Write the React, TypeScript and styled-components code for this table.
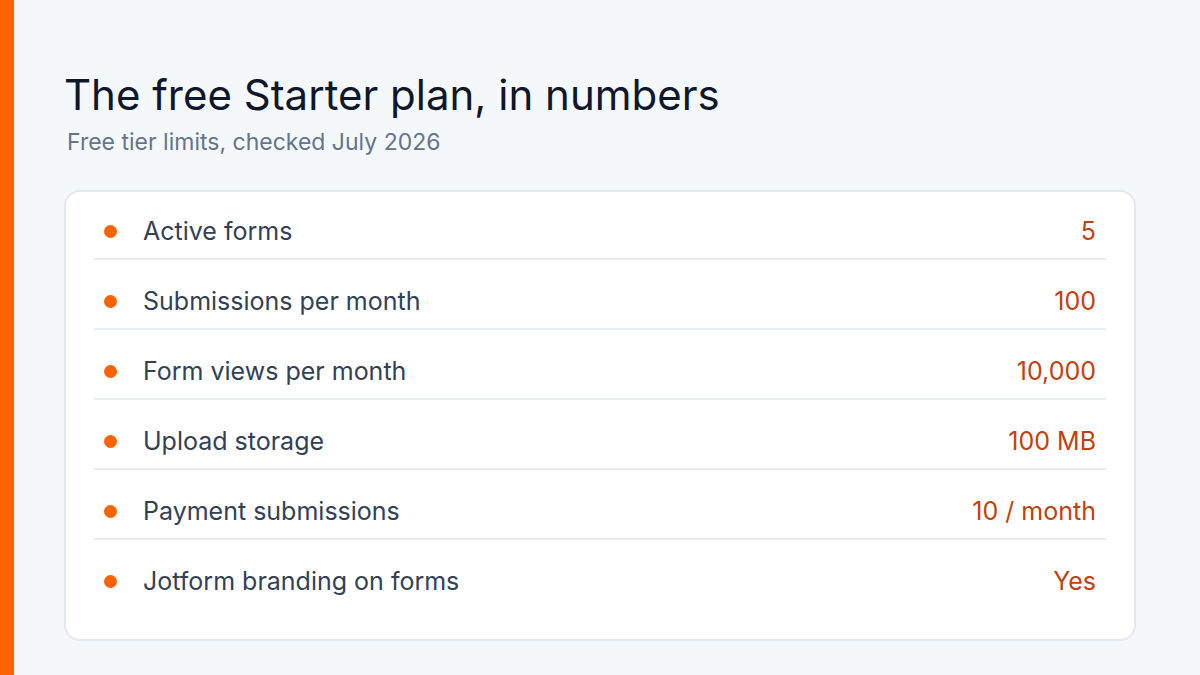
import React from "react";
import styled, { createGlobalStyle } from "styled-components";

const Global = createGlobalStyle`
  html, body { margin: 0; padding: 0; }
  body {
    background: #f5f8fb;
    font-family: Inter, "Noto Sans", sans-serif;
    -webkit-font-smoothing: antialiased;
  }
`;

const Page = styled.div`
  display: flex;
  width: 1200px;
  height: 675px;
  background: #f5f8fb;
  overflow: hidden;
`;

const Accent = styled.div`
  width: 14px;
  flex: none;
  background: #ff6200;
`;

const Main = styled.main`
  flex: 1;
  padding: 70px 64px 0 50px;
  display: flex;
  flex-direction: column;
`;

const Title = styled.h1`
  margin: 0;
  font-size: 42px;
  line-height: 50px;
  font-weight: 400;
  color: #0f172a;
`;

const Subtitle = styled.p`
  margin: 8px 0 0 3px;
  font-size: 23px;
  line-height: 28px;
  color: #64748b;
`;

const Card = styled.section`
  margin-top: 34px;
  background: #ffffff;
  border: 2px solid #e2e8f0;
  border-radius: 16px;
  padding: 11px 28px 31px;
  display: flex;
  flex-direction: column;
  gap: 13px;
`;

const Row = styled.div<{ $last?: boolean }>`
  display: flex;
  align-items: center;
  padding: 13px 10px 12px 10px;
  line-height: 30px;
  border-bottom: ${(p) => (p.$last ? "none" : "2px solid #e9eef4")};
`;

const Dot = styled.span`
  width: 13px;
  height: 13px;
  border-radius: 50%;
  background: #ff6200;
  flex: none;
  margin-right: 26px;
`;

const Label = styled.span`
  flex: 1;
  font-size: 25px;
  color: #334155;
`;

const Value = styled.span`
  font-size: 25px;
  color: #c2410c;
`;

const rows: [string, string][] = [
  ["Active forms", "5"],
  ["Submissions per month", "100"],
  ["Form views per month", "10,000"],
  ["Upload storage", "100 MB"],
  ["Payment submissions", "10 / month"],
  ["Jotform branding on forms", "Yes"],
];

export default function App() {
  return (
    <>
      <Global />
      <Page>
        <Accent />
        <Main>
          <Title>The free Starter plan, in numbers</Title>
          <Subtitle>Free tier limits, checked July 2026</Subtitle>
          <Card>
            {rows.map(([l, v], i) => (
              <Row key={l} $last={i === rows.length - 1}>
                <Dot />
                <Label>{l}</Label>
                <Value>{v}</Value>
              </Row>
            ))}
          </Card>
        </Main>
      </Page>
    </>
  );
}
